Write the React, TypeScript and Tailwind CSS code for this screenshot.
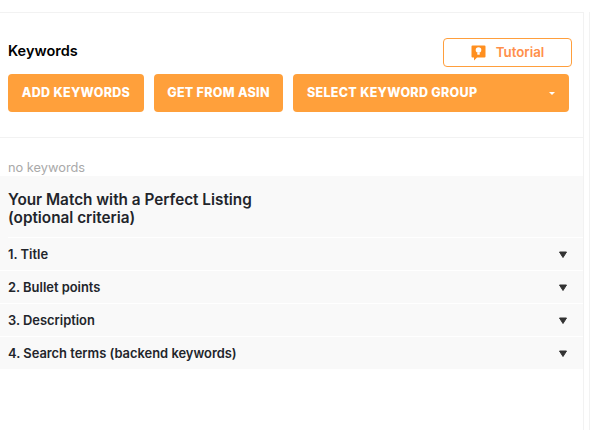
const font = "font-['Inter','Liberation_Sans',sans-serif]";

function TutorialIcon() {
  return (
    <svg width="15" height="16" viewBox="0 0 15 16" className="shrink-0">
      <path d="M1.500 0.500h12a1 1 0 0 1 1 1v10a1 1 0 0 1-1 1H6L3 15.500V12.500H1.500a1 1 0 0 1-1-1v-10a1 1 0 0 1 1-1z" fill="#ff8f1f" />
      <circle cx="7.500" cy="5" r="2.800" fill="#fff" />
      <rect x="6.300" y="7.500" width="2.400" height="2.200" fill="#fff" />
    </svg>
  );
}

function Caret() {
  return (
    <svg width="8" height="7" viewBox="0 0 8 7">
      <path d="M0.500 1h7L4 6.500z" fill="#333" stroke="#333" strokeLinejoin="round" />
    </svg>
  );
}

const rows = ["1. Title", "2. Bullet points", "3. Description", "4. Search terms (backend keywords)"];

export default function App() {
  return (
    <div className={`${font} flex h-[430px] w-[598px] overflow-hidden bg-white pt-3`}>
      <div className="w-[584px] shrink-0 border-t border-r border-[#f2f2f2]">
        <div className="flex h-[125px] flex-col border-b border-[#f2f2f2] pl-2">
          <div className="flex h-[61px] items-start justify-between pr-[11px]">
            <h2 className="pt-[28px] text-[14.500px] leading-5 font-semibold text-black">Keywords</h2>
            <button className="mt-[25px] flex h-[29px] w-[129px] items-center justify-center gap-[10px] rounded-[4px] border border-[#ff9f3d] bg-white text-[13.300px] font-semibold text-[#ff8f4a]">
              <TutorialIcon />
              <span className="pt-px">Tutorial</span>
            </button>
          </div>
          <div className="flex gap-[10px]">
            <button className="h-[38px] w-[136px] rounded-[4px] bg-[#ffa03b] pt-px text-[12.500px] font-extrabold tracking-[0.3px] text-white">ADD KEYWORDS</button>
            <button className="h-[38px] w-[129px] rounded-[4px] bg-[#ffa03b] pt-px text-[12.500px] font-extrabold tracking-[0.3px] text-white">GET FROM ASIN</button>
            <button className="flex h-[38px] w-[276px] items-center justify-between rounded-[4px] bg-[#ffa03b] pt-px pr-[14px] pl-[14px] text-[12.500px] font-extrabold tracking-[0.3px] text-white">
              SELECT KEYWORD GROUP
              <span className="h-0 w-0 border-x-[3px] border-t-[3px] border-x-transparent border-t-white" />
            </button>
          </div>
        </div>
        <p className="h-[38px] pt-[21px] pl-2 text-[12.800px] leading-[17px] text-[#a9a9a9]">no keywords</p>
        <div className="bg-[#f9f9f9]">
          <div className="ml-2 h-[62px] border-b border-white pt-[15px] text-[15.300px] leading-[18px] font-semibold text-[#22252b]">
            Your Match with a Perfect Listing
            <br />
            (optional criteria)
          </div>
          {rows.map((row, i) => (
            <div key={row} className={`flex items-center justify-between pr-4 pl-2 text-[12.900px] font-semibold text-[#22252b] ${i < 3 ? "h-[33px] border-b border-white" : "h-[32px]"}`}>
              <span className="pt-px">{row}</span>
              <Caret />
            </div>
          ))}
        </div>
      </div>
      <div className="ml-[5px] w-[9px] border-l border-[#f2f2f2]" />
    </div>
  );
}
